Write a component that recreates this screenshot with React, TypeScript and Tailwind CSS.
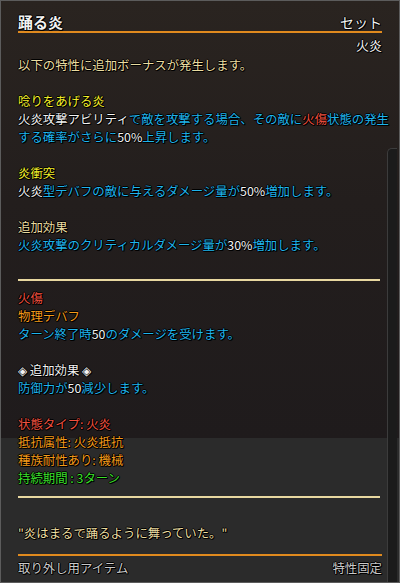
import React from 'react';

const W = 'text-[#f2f2f2]';
const C = 'text-[#1fb4ec]';
const R = 'text-[#f0503f]';
const Y = 'text-[#f5f02a]';
const T = 'text-[#eadca0]';
const O = 'text-[#f29a1a]';
const G = 'text-[#3ae02a]';

const Line = ({ children, className = '' }: { children?: React.ReactNode; className?: string }) => (
  <div className={`h-[18px] leading-[18px] whitespace-nowrap ${className}`}>{children}</div>
);

const Blank = () => <div className="h-[18px]" />;

const App = () => {
  return (
    <div
      className="relative w-[400px] h-[583px] overflow-hidden border border-[#5c5c5c] bg-[linear-gradient(to_bottom,#2a2420_0px,#231e1d_200px,#1f1b1c_437px,#2b2b2b_437px,#2b2b2b_100%)] text-[12.4px] [font-family:'Noto_Sans_CJK_JP','Noto_Sans',sans-serif] [text-shadow:1px_1px_0_#000,-1px_0_0_#000,0_-1px_0_#000,1px_0_0_#000,0_1px_0_#000]"
    >
      {/* scrollbar */}
      <div className="absolute right-[2px] top-[147px] bottom-0 w-[10px] rounded-tl-[5px] bg-[#1b1b1b] border-l border-t border-[#3c3c3c]" />

      <div className="relative pl-[17px] pr-[17px] pt-[12px]">
        <div className="flex items-end justify-between h-[18px] leading-[18px]">
          <span className={`${W} text-[15px] font-bold`}>踊る炎</span>
          <span className={`${W} text-[14px]`}>セット</span>
        </div>
        <div className="h-[2px] bg-[#e08a1e]" />
        <Line className={`${W} text-right text-[13px] mt-[3px]`}>火炎</Line>
        <Line className={`${T} mt-[2px]`}>以下の特性に追加ボーナスが発生します。</Line>
        <Blank />
        <Line className={Y}>唸りをあげる炎</Line>
        <Line className={C}>
          <span className={W}>火炎攻撃アビリティ</span>で敵を攻撃する場合、その敵に<span className={R}>火傷</span>状態の発生
        </Line>
        <Line className={C}>
          する確率がさらに<span className={W}>50%</span>上昇します。
        </Line>
        <Blank />
        <Line className={Y}>炎衝突</Line>
        <Line className={C}>
          <span className={W}>火炎</span>型デバフの敵に与えるダメージ量が<span className={W}>50%</span>増加します。
        </Line>
        <Blank />
        <Line className={T}>追加効果</Line>
        <Line className={C}>
          火炎攻撃のクリティカルダメージ量が<span className={W}>30%</span>増加します。
        </Line>
        <div className="h-[25px]" />
        <div className="h-[2px] bg-[#e8d8a0] mr-[2px]" />
        <div className="h-[8px]" />
        <Line className={R}>火傷</Line>
        <Line className={O}>物理デバフ</Line>
        <Line className={C}>
          ターン終了時<span className={W}>50</span>のダメージを受けます。
        </Line>
        <Blank />
        <Line className={W}>◈ 追加効果 ◈</Line>
        <Line className={C}>
          防御力が<span className={W}>50</span>減少します。
        </Line>
        <Blank />
        <Line className={R}>状態タイプ: 火炎</Line>
        <Line className={O}>抵抗属性: 火炎抵抗</Line>
        <Line className={O}>種族耐性あり: 機械</Line>
        <Line className={G}>持続期間 : 3ターン</Line>
        <div className="h-[9px]" />
        <div className="h-[2px] bg-[#e8d8a0] mr-[2px]" />
        <div className="h-[26px]" />
        <Line className={T}>"炎はまるで踊るように舞っていた。"</Line>
        <div className="h-[12px]" />
        <div className="h-[2px] bg-[#e08a1e]" />
        <div className="flex items-center justify-between h-[18px] mt-[3px] text-[#c8c8c8]">
          <span>取り外し用アイテム</span>
          <span>特性固定</span>
        </div>
      </div>
    </div>
  );
};

export default App;
